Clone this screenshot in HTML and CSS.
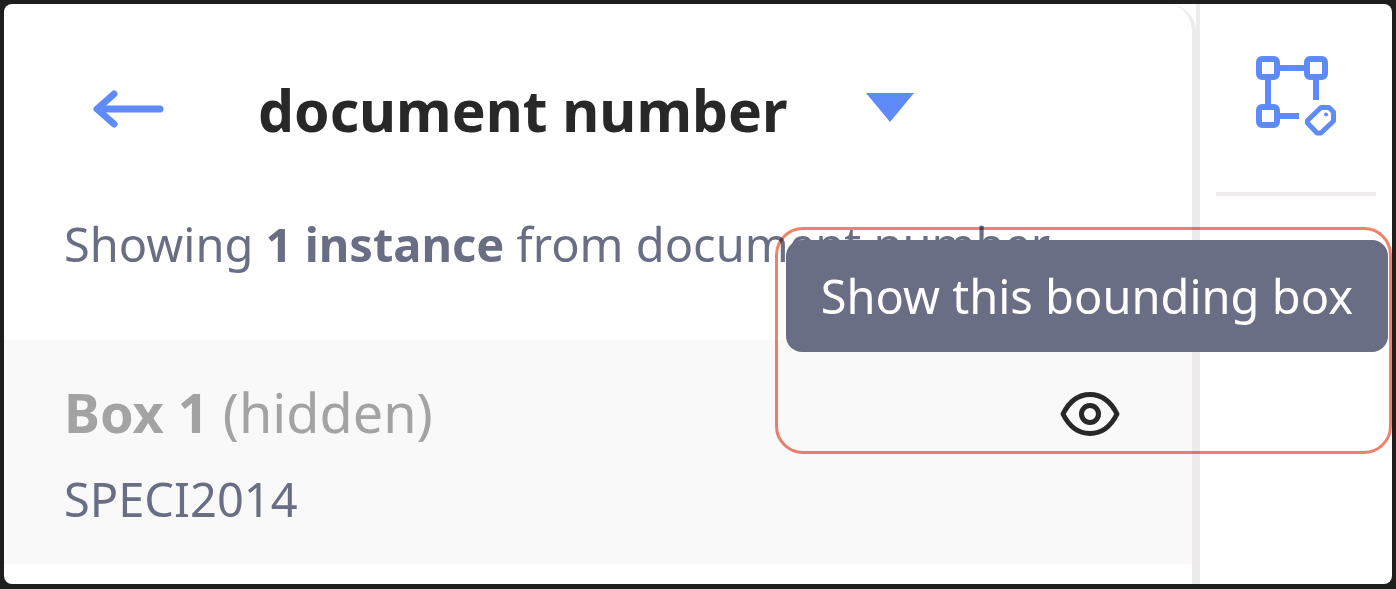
FILE: index.html
```
<!DOCTYPE html>
<html lang="en">
<head>
    <meta charset="UTF-8">
    <meta name="viewport" content="width=device-width, initial-scale=1.0">
    <title>document number</title>
    <link rel="stylesheet" href="styles.css">
</head>
<body>
    <div class="window">
        <main class="panel">
            <header class="panel-header">
                <button class="icon-btn back-btn" type="button" aria-label="Back">
                    <svg width="72" height="40" viewBox="0 0 72 40" fill="none" stroke="#5f8bfa" stroke-width="7" stroke-linecap="round" stroke-linejoin="round">
                        <path d="M68 19H6"/>
                        <path d="M22 4L5 19L22 34"/>
                    </svg>
                </button>
                <h1 class="title">document number</h1>
                <button class="icon-btn" type="button" aria-label="Choose label">
                    <svg width="48" height="34" viewBox="0 0 48 34" fill="#5f8bfa">
                        <path d="M0 0H48L24 29Z"/>
                    </svg>
                </button>
            </header>
            <p class="summary">Showing <b>1 instance</b> from document number</p>
            <section class="box-row">
                <div class="box-info">
                    <h2 class="box-name"><b>Box 1</b> (hidden)</h2>
                    <p class="box-value">SPECI2014</p>
                </div>
                <button class="icon-btn" type="button" aria-label="Show box" aria-describedby="tip">
                    <svg width="60" height="46" viewBox="0 0 60 46" fill="none" stroke="#282828" stroke-width="5">
                        <path d="M3 23C9 11 18 3.500 30 3.500S51 11 57 23C51 35 42 42.500 30 42.500S9 35 3 23Z" stroke-linejoin="round"/>
                        <circle cx="30" cy="23" r="8.500"/>
                    </svg>
                </button>
                <div class="tooltip" id="tip" role="tooltip">Show this bounding box</div>
                <div class="highlight"></div>
            </section>
        </main>
        <aside class="toolbar">
            <button class="icon-btn tool-btn" type="button" aria-label="Label boxes">
                <svg width="82" height="82" viewBox="0 0 82 82" fill="none" stroke="#5f8bfa" stroke-width="6">
                    <rect x="3" y="3" width="18" height="18" rx="3"/>
                    <rect x="51" y="3" width="18" height="18" rx="3"/>
                    <rect x="3" y="51" width="18" height="18" rx="3"/>
                    <path d="M21 12H51M12 21V51M60 21V44M21 60H43"/>
                    <path d="M65 51.500H73L77.500 56V65L65 77H61L51.500 67V64.500Z" stroke-width="5" stroke-linejoin="round"/>
                    <circle cx="70" cy="58.500" r="2" fill="#5f8bfa" stroke="none"/>
                </svg>
            </button>
        </aside>
    </div>
</body>
</html>
```
FILE: styles.css
```
* {
    box-sizing: border-box;
}
body {
    margin: 0;
    padding: 4px 4px 5px;
    min-height: 100vh;
    display: flex;
    background: #1e1e1e;
    color: #696e85;
    font-family: "Noto Sans", sans-serif;
    font-size: 47px;
    line-height: 60px;
}
h1, h2, p {
    margin: 0;
    font-weight: normal;
}
.window {
    flex: 1;
    display: flex;
    background: white;
    border-radius: 8px;
    overflow: hidden;
}
.icon-btn {
    display: flex;
    padding: 0;
    border: none;
    background: none;
    cursor: pointer;
}
.panel {
    flex: 1;
    min-width: 0;
    border-right: 4px solid #edebeb;
    border-top-right-radius: 28px;
}
.panel-header {
    display: flex;
    align-items: center;
    padding: 66px 60px 0 88px;
}
.title {
    margin: 0 78px 0 94px;
    color: #282828;
    font-size: 57px;
    font-weight: bold;
    line-height: 80px;
    white-space: nowrap;
}
.summary {
    padding: 64px 60px 66px;
    white-space: nowrap;
}
.box-row {
    position: relative;
    display: flex;
    justify-content: space-between;
    padding: 36px 72px 32px 60px;
    background: #f9f9f9;
}
.box-row .icon-btn {
    align-self: flex-start;
    padding-top: 15px;
}
.box-name {
    color: #a3a3a3;
    font-size: 54px;
    line-height: 72px;
}
.box-value {
    padding-top: 18px;
    line-height: 66px;
}
.tooltip {
    position: absolute;
    right: -196px;
    bottom: 212px;
    z-index: 1;
    padding: 26px 35px;
    border-radius: 16px;
    background: #696e85;
    color: white;
    white-space: nowrap;
}
/* outline around the tooltip and its button */
.highlight {
    position: absolute;
    right: -200px;
    bottom: 110px;
    z-index: 2;
    width: 617px;
    height: 227px;
    border: 3px solid #f1816a;
    border-radius: 28px;
    mix-blend-mode: multiply;
    pointer-events: none;
}
.toolbar {
    width: 196px;
    padding: 0 16px;
    border-left: 4px solid #edebeb;
}
.tool-btn {
    width: 100%;
    padding: 52px 0 54px 40px;
    border-bottom: 4px solid #edebeb;
}
```
